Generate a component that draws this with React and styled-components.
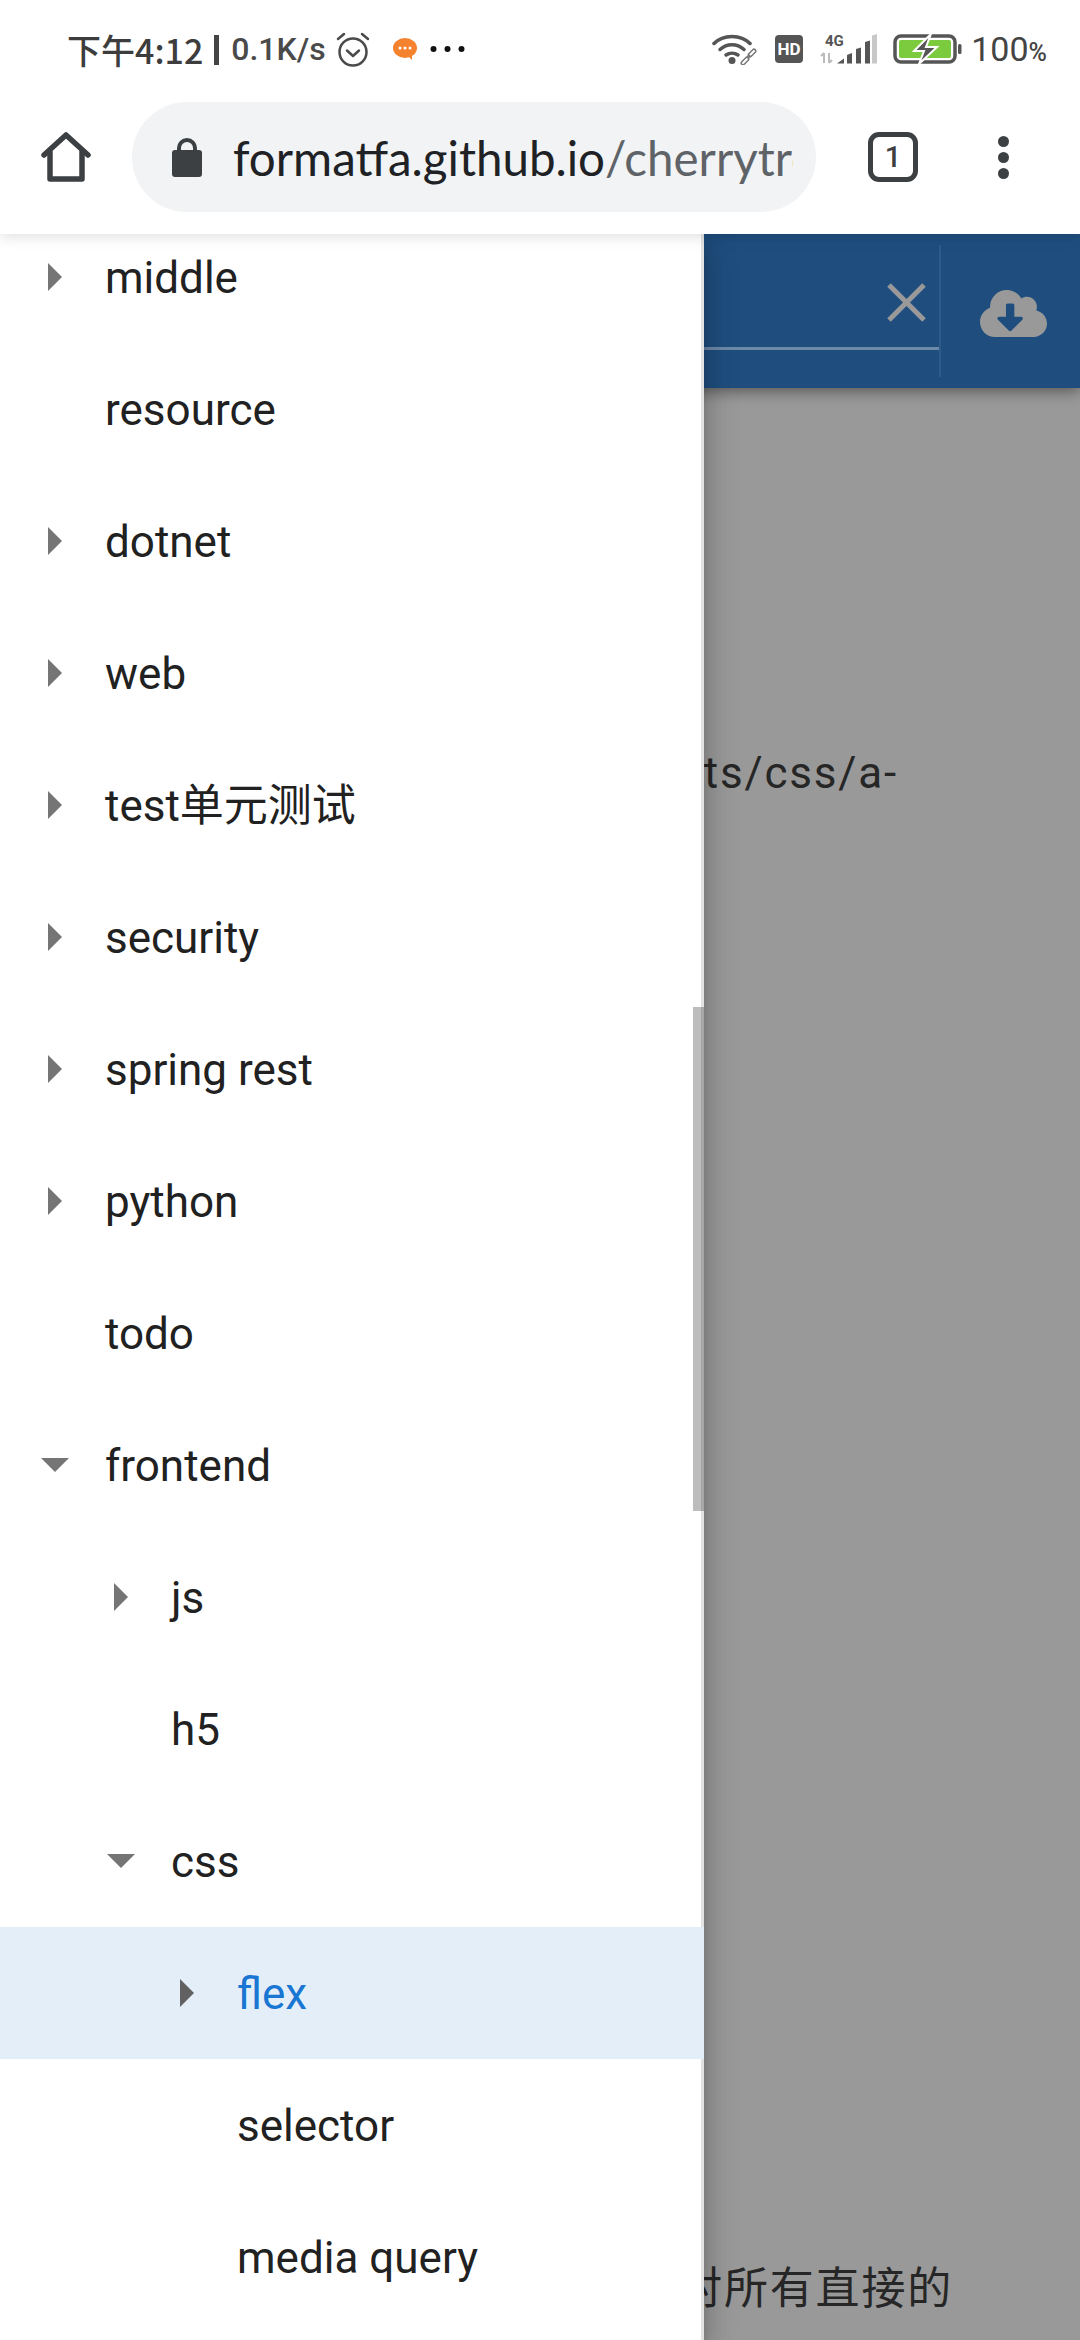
import React from 'react';
import styled, { createGlobalStyle } from 'styled-components';
import { FaCloudDownloadAlt } from 'react-icons/fa';

const GlobalStyle = createGlobalStyle`
  html, body {
    margin: 0;
    padding: 0;
    background: #fff;
  }

  body {
    font-family: Roboto, 'Noto Sans CJK SC', sans-serif;
  }
`;

const Page = styled.div`
  width: 1080px;
  height: 2340px;
  display: flex;
  flex-direction: column;
  overflow: hidden;
`;

const StatusBar = styled.div`
  height: 98px;
  flex: none;
  display: flex;
  align-items: center;
  justify-content: space-between;
  padding: 0 33px 0 67px;
  background: #fff;
  position: relative;
  z-index: 4;
`;

const StatusGroup = styled.div`
  display: flex;
  align-items: center;
`;

const Clock = styled.span`
  font: 500 34px 'Noto Sans CJK SC', Roboto, sans-serif;
  color: #3d3d3d;
  white-space: nowrap;
`;

const Pipe = styled.i`
  display: block;
  width: 5px;
  height: 30px;
  margin: 2px 12px 0 11px;
  background: #444;
`;

const Speed = styled.span`
  font: 500 32px Roboto, sans-serif;
  color: #4a4a4a;
  white-space: nowrap;
`;

const StatusIcon = styled.svg`
  display: block;
  flex: none;
  margin-left: ${(p) => p.$gap || 0}px;
`;

const Percent = styled.span`
  font: 400 34px Roboto, sans-serif;
  color: #444;
  margin-left: 9px;
  white-space: nowrap;
  small {
    font-size: 25px;
    font-weight: 500;
  }
`;

const Toolbar = styled.div`
  height: 136px;
  flex: none;
  display: flex;
  align-items: flex-start;
  padding-top: 4px;
  box-sizing: border-box;
  background: #fff;
  position: relative;
  z-index: 3;
  box-shadow: 0 2px 14px rgba(0, 0, 0, 0.14);
`;

const ToolButton = styled.div`
  height: 110px;
  width: ${(p) => p.$width}px;
  flex: none;
  display: flex;
  align-items: center;
  justify-content: center;
`;

const AddressPill = styled.div`
  width: 684px;
  height: 110px;
  flex: none;
  display: flex;
  align-items: center;
  box-sizing: border-box;
  padding: 0 23px 0 40px;
  border-radius: 55px;
  background: #f1f3f4;
`;

const Url = styled.div`
  margin-left: 31px;
  flex: 1;
  overflow: hidden;
  white-space: nowrap;
  font: 400 47.5px Lato, sans-serif;
  color: #202124;
  span {
    color: #5f6368;
  }
`;

const TabCount = styled.div`
  width: 50px;
  height: 50px;
  box-sizing: border-box;
  border: 5px solid #3c4043;
  border-radius: 11px;
  display: flex;
  align-items: center;
  justify-content: center;
  font: 500 29px Roboto, sans-serif;
  color: #3c4043;
`;

const Kebab = styled.div`
  display: flex;
  flex-direction: column;
  gap: 5px;
  i {
    display: block;
    width: 11px;
    height: 11px;
    border-radius: 50%;
    background: #3c4043;
  }
`;

const Content = styled.div`
  flex: 1;
  position: relative;
  overflow: hidden;
  background: #999;
`;

const AppBar = styled.div`
  height: 154px;
  display: flex;
  align-items: flex-start;
  background: #1f4e7e;
  box-shadow: 0 3px 14px rgba(0, 0, 0, 0.45);
`;

const SearchField = styled.div`
  width: 941px;
  height: 132px;
  margin-top: 11px;
  flex: none;
  box-sizing: border-box;
  border-right: 2px solid #2f5b88;
`;

const SearchInput = styled.div`
  height: 105px;
  box-sizing: border-box;
  border-bottom: 3px solid #6c89a8;
  display: flex;
  align-items: flex-start;
  justify-content: flex-end;
  padding: 38px 13px 0 0;
`;

const CloudButton = styled.div`
  flex: 1;
  height: 154px;
  display: flex;
  align-items: center;
  justify-content: center;
  color: #999;
  padding-left: 6px;
  padding-top: 2px;
  svg {
    display: block;
  }
`;

const Article = styled.div`
  padding-top: 359px;
  font: 400 44px/53px Roboto, 'Noto Sans CJK SC', sans-serif;
  letter-spacing: 1.8px;
  color: #262626;
  text-align: right;
`;

const ArticleLine = styled.div`
  white-space: nowrap;
  padding-right: ${(p) => p.$right}px;
  margin-bottom: ${(p) => p.$after || 0}px;
`;

const Drawer = styled.div`
  position: absolute;
  left: 0;
  top: 0;
  bottom: 0;
  width: 704px;
  overflow: hidden;
  background: #fff;
  box-shadow: inset -3px 0 0 #e2e2e2, 0 8px 10px -5px rgba(0, 0, 0, 0.2),
    0 16px 24px 2px rgba(0, 0, 0, 0.14), 0 6px 30px 5px rgba(0, 0, 0, 0.12);
`;

const TreeList = styled.div`
  margin-top: -23px;
`;

const TreeRow = styled.div`
  height: 132px;
  box-sizing: border-box;
  display: flex;
  align-items: center;
  padding: 1px 0 0 ${(p) => 105 + p.$level * 66}px;
  position: relative;
  background: ${(p) => (p.$selected ? '#e3eef8' : 'transparent')};
  color: ${(p) => (p.$selected ? '#1976d2' : '#212121')};
  font: 400 44px/52px Roboto, 'Noto Sans CJK SC', sans-serif;
`;

const Arrow = styled.div`
  position: absolute;
  left: ${(p) => 22 + p.$level * 66}px;
  top: 33px;
  width: 66px;
  height: 66px;
  display: flex;
  align-items: center;
  justify-content: center;
  svg {
    display: block;
    transform: rotate(${(p) => (p.$open ? 90 : 0)}deg);
  }
`;

const ScrollThumb = styled.div`
  position: absolute;
  right: 0;
  top: 773px;
  width: 11px;
  height: 504px;
  background: rgba(0, 0, 0, 0.26);
`;

const rows = [
  { label: 'middle', level: 0, arrow: 'closed' },
  { label: 'resource', level: 0 },
  { label: 'dotnet', level: 0, arrow: 'closed' },
  { label: 'web', level: 0, arrow: 'closed' },
  { label: 'test单元测试', level: 0, arrow: 'closed' },
  { label: 'security', level: 0, arrow: 'closed' },
  { label: 'spring rest', level: 0, arrow: 'closed' },
  { label: 'python', level: 0, arrow: 'closed' },
  { label: 'todo', level: 0 },
  { label: 'frontend', level: 0, arrow: 'open' },
  { label: 'js', level: 1, arrow: 'closed' },
  { label: 'h5', level: 1 },
  { label: 'css', level: 1, arrow: 'open' },
  { label: 'flex', level: 2, arrow: 'closed', selected: true },
  { label: 'selector', level: 2 },
  { label: 'media query', level: 2 },
];

const App = () => (
  <Page>
    <GlobalStyle />
    <StatusBar>
      <StatusGroup>
        <Clock>下午4:12</Clock>
        <Pipe />
        <Speed>0.1K/s</Speed>
        <StatusIcon $gap={10} width="34" height="35" viewBox="0 0 34 35" fill="none" stroke="#4a4a4a">
          <circle cx="17" cy="20" r="13.5" strokeWidth="2.5" />
          <path d="M11 18.5l6 5.5 6-5.5" strokeWidth="2.5" strokeLinecap="round" strokeLinejoin="round" />
          <path d="M2 7l6-5M32 7l-6-5" strokeWidth="2.5" strokeLinecap="round" />
        </StatusIcon>
        <StatusIcon $gap={23} width="24" height="22" viewBox="0 0 24 22">
          <ellipse cx="12" cy="10" rx="12" ry="10" fill="#f5822e" />
          <path d="M15 18l4 4v-6z" fill="#f5822e" />
          <circle cx="7" cy="10" r="1.5" fill="#fff" />
          <circle cx="12" cy="10" r="1.5" fill="#fff" />
          <circle cx="17" cy="10" r="1.5" fill="#fff" />
        </StatusIcon>
        <StatusIcon $gap={13} width="35" height="8" viewBox="0 0 35 8" fill="#111">
          <circle cx="3.5" cy="4" r="3" />
          <circle cx="17.5" cy="4" r="3" />
          <circle cx="31.5" cy="4" r="3" />
        </StatusIcon>
      </StatusGroup>
      <StatusGroup>
        <StatusIcon width="46" height="32" viewBox="0 0 46 32" fill="none" stroke="#555">
          <path d="M2 10.500C11 1 29 1 38 10.500" strokeWidth="3.500" strokeLinecap="round" />
          <path d="M8 16.500c7-6.500 17-6.500 24 0" strokeWidth="3.500" strokeLinecap="round" />
          <path d="M14 22c3.500-2.500 8.500-2.500 12 0" strokeWidth="3.500" strokeLinecap="round" />
          <circle cx="20" cy="27.500" r="3.500" fill="#555" stroke="none" />
          <path d="M31 30l4-4M38 22l4-4" strokeWidth="5" strokeLinecap="round" stroke="#777" />
          <path d="M31 30l4-4M38 22l4-4" strokeWidth="2" strokeLinecap="round" stroke="#fff" />
          <path d="M35 25l3-3" strokeWidth="2" stroke="#777" />
        </StatusIcon>
        <StatusIcon $gap={17} width="28" height="28" viewBox="0 0 28 28">
          <rect width="28" height="28" rx="4" fill="#555" />
          <text x="14" y="20" textAnchor="middle" fontFamily="Roboto, sans-serif" fontWeight="700" fontSize="17" fill="#fff">HD</text>
        </StatusIcon>
        <StatusIcon $gap={17} width="57" height="30" viewBox="0 0 57 30">
          <text x="5" y="11.500" fontFamily="Roboto, sans-serif" fontWeight="700" fontSize="15" fill="#555">4G</text>
          <path d="M4 29v-10M1 22l3-3M9 19v10M12 26l-3 3" stroke="#bbb" strokeWidth="2" fill="none" />
          <path d="M17 29.500l7-5v5zM27 21l5-2v10.500h-5zM36 15l5-1.500v16h-5zM45 8l5-1.500v23h-5z" fill="#555" />
          <path d="M52 1.500l5-1.500v29.500h-5z" fill="#c8c8c8" />
        </StatusIcon>
        <StatusIcon $gap={16} width="69" height="30" viewBox="0 0 69 30">
          <rect x="2" y="2" width="60" height="26" rx="6" fill="none" stroke="#555" strokeWidth="3.500" />
          <rect x="6" y="6" width="52" height="18" rx="2" fill="#7ccb3e" />
          <rect x="65" y="10" width="3.500" height="10" rx="1.500" fill="#555" />
          <path d="M38 0L21 17h10l-5 13 18-17H33z" fill="#555" stroke="#fff" strokeWidth="2" />
        </StatusIcon>
        <Percent>100<small>%</small></Percent>
      </StatusGroup>
    </StatusBar>

    <Toolbar>
      <ToolButton $width={132}>
        <svg width="50" height="50" viewBox="0 0 50 50" fill="none" stroke="#3c4043" strokeWidth="5.500" strokeLinejoin="round" strokeLinecap="round">
          <path d="M3 23L25 3l22 20" />
          <path d="M9 20v27h32V20" />
        </svg>
      </ToolButton>
      <AddressPill>
        <svg width="30" height="40" viewBox="0 0 30 40" style={{ flex: 'none' }}>
          <path d="M7 18v-7a8 8 0 0 1 16 0v7" fill="none" stroke="#3c4043" strokeWidth="4" />
          <rect x="0" y="13" width="30" height="27" rx="3" fill="#3c4043" />
        </svg>
        <Url>formatfa.github.io<span>/cherrytree</span></Url>
      </AddressPill>
      <ToolButton $width={154}>
        <TabCount>1</TabCount>
      </ToolButton>
      <ToolButton $width={66}>
        <Kebab><i /><i /><i /></Kebab>
      </ToolButton>
    </Toolbar>

    <Content>
      <AppBar>
        <SearchField>
          <SearchInput>
            <svg width="39" height="39" viewBox="0 0 39 39" stroke="#999" strokeWidth="5" style={{ display: 'block' }}>
              <path d="M2 2l35 35M37 2L2 37" />
            </svg>
          </SearchInput>
        </SearchField>
        <CloudButton>
          <FaCloudDownloadAlt size={67} />
        </CloudButton>
      </AppBar>
      <Article>
        <ArticleLine $right={182} $after={1463}>https://css-tricks.com/snippets/css/a-</ArticleLine>
        <ArticleLine $right={127}>容器对所有直接的</ArticleLine>
      </Article>

      <Drawer>
        <TreeList>
          {rows.map((row) => (
            <TreeRow key={row.label} $level={row.level} $selected={row.selected}>
              {row.arrow && (
                <Arrow $level={row.level} $open={row.arrow === 'open'}>
                  <svg width="28" height="28" viewBox="0 0 28 28">
                    <path d="M7 0l14 14L7 28z" fill={row.selected ? '#616161' : '#757575'} />
                  </svg>
                </Arrow>
              )}
              {row.label}
            </TreeRow>
          ))}
        </TreeList>
        <ScrollThumb />
      </Drawer>
    </Content>
  </Page>
);

export default App;
